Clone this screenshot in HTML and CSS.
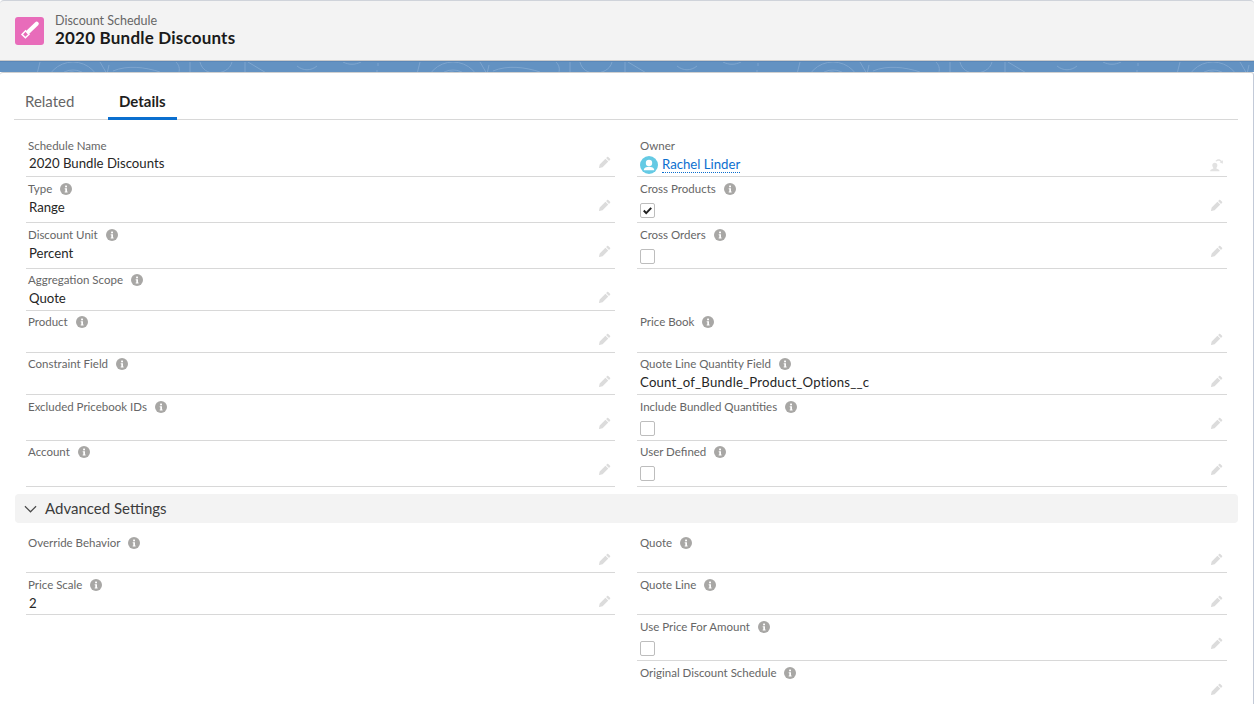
FILE: index.html
```html
<!DOCTYPE html>
<html lang="en">
<head>
<meta charset="utf-8">
<title>2020 Bundle Discounts</title>
<link rel="stylesheet" href="styles.css">
</head>
<body>
<svg width="0" height="0" class="defs" aria-hidden="true">
  <symbol id="pencil" viewBox="0 0 12 12"><path d="M9.2.9l1.900 1.900c.3.3.3.7 0 1L10 4.900 7.100 2 8.200.9c.3-.3.7-.3 1 0zM6.400 2.700l2.900 2.900-5.700 5.700-3.300.7c-.2 0-.4-.2-.3-.4l.7-3.200z"/></symbol>
  <symbol id="info" viewBox="0 0 12 12"><circle cx="6" cy="6" r="6" fill="#a8a7a5"/><rect x="5.100" y="2.600" width="1.900" height="1.700" fill="#fff"/><path d="M4.700 5.200h2.300v3.200h.6v1H4.700v-1h.6V6.200h-.6z" fill="#fff"/></symbol>
  <g id="tile" fill="none" stroke="#8db0d6" stroke-width="1" opacity=".65">
    <circle cx="73" cy="28" r="28"/><circle cx="73" cy="28" r="20"/>
    <path d="M66 12c4-3 9-3 14 2"/>
    <path d="M37 12l3-12M100 0l7 12 2-9M113 9c14-6 32-4 47 1M176 0c4 4 4 9 2 12M190 12V0M200 0c2 8 8 11 15 11s15-3 17-11M245 12V0M248 0l20 12M297 4c6 5 14 5 20 0M343 0c6 3 12 3 18 0M377 12V8M378 4V1"/>
  </g>
</svg>
<header class="page-head">
  <span class="obj-icon">
    <svg viewBox="0 0 29 28" width="29" height="28"><path d="M21.700 6.700L13.300 14.700" fill="none" stroke="#fff" stroke-width="4.200" stroke-linecap="round"/><path d="M10.600 13.800l3.400 3.400-3.600 3.600-3.400-3.400z" fill="none" stroke="#fff" stroke-width="1.500"/></svg>
  </span>
  <div class="head-text">
    <div class="head-type">Discount Schedule</div>
    <div class="head-title">2020 Bundle Discounts</div>
  </div>
</header>
<div class="banner">
  <svg class="banner-art" width="1254" height="12" viewBox="0 0 1254 12" aria-hidden="true">
    <use href="#tile"/>
    <use href="#tile" x="380"/>
    <use href="#tile" x="760"/>
    <use href="#tile" x="1140"/>
  </svg>
</div>
<main class="card">
  <nav class="tabs">
    <span class="tab">Related</span>
    <span class="tab tab-active">Details</span>
  </nav>
  <section class="grid grid-main">
    <div class="field f-first"><div class="label">Schedule Name</div><div class="value v-first">2020 Bundle Discounts</div><svg class="edit"><use href="#pencil"/></svg></div>
    <div class="field f-first"><div class="label">Owner</div><div class="value v-first owner"><span class="avatar"><svg viewBox="0 0 18 18" width="18" height="18"><circle cx="9" cy="9" r="9" fill="#65cae4"/><circle cx="9" cy="7" r="3.200" fill="#fff"/><path d="M3.800 13.800c0-1.900 2.500-3 5.200-3s5.200 1.100 5.200 3v.5H3.800z" fill="#fff"/></svg></span><a class="link">Rachel Linder</a></div><svg class="edit owner-edit" viewBox="0 0 12 12"><path d="M1 11.300c0-1 .8-1.500 2.200-2 .5-.2.600-.6.400-1-.5-.6-.8-1.300-.8-2.100C2.800 4.900 3.700 4 5 4s2.200.9 2.200 2.200c0 .8-.3 1.500-.8 2.100-.2.4-.1.800.4 1 1.400.5 2.200 1 2.200 2z"/><path d="M5.500 2.500C7 .5 9.500.5 11 2.500l1-.6-.2 3-2.700-1.200.9-.6C9 2 7.500 2 6.300 3z"/></svg></div>

    <div class="field"><div class="label">Type<svg class="info"><use href="#info"/></svg></div><div class="value">Range</div><svg class="edit"><use href="#pencil"/></svg></div>
    <div class="field"><div class="label">Cross Products<svg class="info"><use href="#info"/></svg></div><div class="value"><span class="check"><svg viewBox="0 0 14 14" width="13" height="13"><path d="M3 7l2.600 2.800L11 4.200" fill="none" stroke="#222" stroke-width="2.200"/></svg></span></div><svg class="edit"><use href="#pencil"/></svg></div>

    <div class="field"><div class="label">Discount Unit<svg class="info"><use href="#info"/></svg></div><div class="value">Percent</div><svg class="edit"><use href="#pencil"/></svg></div>
    <div class="field"><div class="label">Cross Orders<svg class="info"><use href="#info"/></svg></div><div class="value"><span class="check"></span></div><svg class="edit"><use href="#pencil"/></svg></div>

    <div class="field f-short"><div class="label">Aggregation Scope<svg class="info"><use href="#info"/></svg></div><div class="value">Quote</div><svg class="edit"><use href="#pencil"/></svg></div>
    <div class="field-empty"></div>

    <div class="field f-short"><div class="label">Product<svg class="info"><use href="#info"/></svg></div><div class="value"></div><svg class="edit"><use href="#pencil"/></svg></div>
    <div class="field f-short"><div class="label">Price Book<svg class="info"><use href="#info"/></svg></div><div class="value"></div><svg class="edit"><use href="#pencil"/></svg></div>

    <div class="field f-short"><div class="label">Constraint Field<svg class="info"><use href="#info"/></svg></div><div class="value"></div><svg class="edit"><use href="#pencil"/></svg></div>
    <div class="field f-short"><div class="label">Quote Line Quantity Field<svg class="info"><use href="#info"/></svg></div><div class="value v-code">Count_of_Bundle_Product_Options__c</div><svg class="edit"><use href="#pencil"/></svg></div>

    <div class="field"><div class="label">Excluded Pricebook IDs<svg class="info"><use href="#info"/></svg></div><div class="value"></div><svg class="edit"><use href="#pencil"/></svg></div>
    <div class="field"><div class="label">Include Bundled Quantities<svg class="info"><use href="#info"/></svg></div><div class="value"><span class="check"></span></div><svg class="edit"><use href="#pencil"/></svg></div>

    <div class="field f-tight"><div class="label">Account<svg class="info"><use href="#info"/></svg></div><div class="value"></div><svg class="edit"><use href="#pencil"/></svg></div>
    <div class="field f-tight"><div class="label">User Defined<svg class="info"><use href="#info"/></svg></div><div class="value"><span class="check"></span></div><svg class="edit"><use href="#pencil"/></svg></div>
  </section>
  <div class="section-head">
    <svg viewBox="0 0 14 8" width="13" height="8"><path d="M1 1l6 6 6-6" fill="none" stroke="#4a4a4a" stroke-width="1.300"/></svg>
    <span class="section-title">Advanced Settings</span>
  </div>
  <section class="grid grid-adv">
    <div class="field f-short"><div class="label">Override Behavior<svg class="info"><use href="#info"/></svg></div><div class="value"></div><svg class="edit"><use href="#pencil"/></svg></div>
    <div class="field f-short"><div class="label">Quote<svg class="info"><use href="#info"/></svg></div><div class="value"></div><svg class="edit"><use href="#pencil"/></svg></div>

    <div class="field f-short"><div class="label">Price Scale<svg class="info"><use href="#info"/></svg></div><div class="value">2</div><svg class="edit"><use href="#pencil"/></svg></div>
    <div class="field f-short"><div class="label">Quote Line<svg class="info"><use href="#info"/></svg></div><div class="value"></div><svg class="edit"><use href="#pencil"/></svg></div>

    <div class="field-empty"></div>
    <div class="field"><div class="label">Use Price For Amount<svg class="info"><use href="#info"/></svg></div><div class="value"><span class="check"></span></div><svg class="edit"><use href="#pencil"/></svg></div>

    <div class="field-empty"></div>
    <div class="field"><div class="label">Original Discount Schedule<svg class="info"><use href="#info"/></svg></div><div class="value"></div><svg class="edit"><use href="#pencil"/></svg></div>
  </section>
</main>
</body>
</html>
```
FILE: styles.css
```css
* { box-sizing: border-box; }
html, body { margin: 0; height: 704px; overflow: hidden; }
body { background: #fff; font-family: Lato, "Open Sans", sans-serif; color: #1f1f1f; }
.defs { position: absolute; }

.page-head {
  height: 61px;
  display: flex;
  align-items: center;
  gap: 11px;
  padding: 1px 0 0 15px;
  background: #f3f3f3;
  border-top: 1px solid #cfd3da;
  border-bottom: 1px solid #cbcbcb;
  border-radius: 4px 4px 0 0;
}
.obj-icon {
  width: 29px; height: 28px;
  background: #e86cba;
  border-radius: 3px;
  display: block;
}
.obj-icon svg { display: block; }
.head-text { display: flex; flex-direction: column; padding-bottom: 2px; }
.head-type { font-size: 12.500px; line-height: 15px; color: #666; }
.head-title { font-size: 17px; line-height: 20px; font-weight: 700; color: #1a1a1a; letter-spacing: .2px; }

.banner { height: 11px; background: #6392c2; border-top: 1px solid #5a87b8; overflow: hidden; }
.banner-art { display: block; }

.card {
  height: 632px;
  background: #fff;
  border-top: 1px solid #d0d0d0;
  border-right: 1px solid #c3cad8;
  border-radius: 3px 3px 0 0;
  padding: 0 15px 0 0;
}

.tabs {
  margin-left: 14px;
  height: 47px;
  border-bottom: 1px solid #d8d8d8;
  display: flex;
  font-size: 15px;
  align-items: stretch;
}
.tab {
  padding: 20px 0 0 11px;
  width: 94px;
  color: #666;
  line-height: 17px;
}
.tab-active {
  width: 69px;
  padding-left: 11px;
  color: #1f1f1f;
  font-weight: 700;
  border-bottom: 3px solid #0b6fcf;
  margin-bottom: -1px;
}

.grid {
  display: grid;
  grid-template-columns: 589px 590px;
  column-gap: 22px;
  margin-left: 26px;
}
.grid-main { padding-top: 14px; }

.field {
  position: relative;
  height: 46px;
  border-bottom: 1px solid #d8d8d8;
  padding-top: 5px;
}
.f-first { height: 43px; padding-top: 5px; }
.f-short { height: 42px; padding-top: 5px; }
.grid-main .f-short, .f-tight { padding-top: 4px; }
.field-empty { min-height: 42px; }

.label {
  display: flex;
  align-items: center;
  font-size: 11.500px;
  line-height: 14px;
  color: #666;
  padding-left: 3px;
}
.grid > .field:nth-child(odd) .label { padding-left: 2px; }
.info { width: 12px; height: 12px; margin-left: 8px; flex: none; }
.value {
  font-size: 13.200px;
  line-height: 18px;
  color: #262626;
  padding: 2px 0 0 3px;
  min-height: 18px;
}
.v-first { padding-top: 1px; }
.v-code { letter-spacing: .2px; }
.owner { display: flex; align-items: center; gap: 4px; padding-left: 3px; padding-top: 3px; }
.avatar { width: 18px; height: 18px; display: block; }
.avatar svg { display: block; }
.link { color: #0b6fcf; border-bottom: 1px dotted #0b6fcf; line-height: 15px; }
.check {
  display: block;
  width: 15px; height: 15px;
  margin: 5px 0 0 0;
  border: 1px solid #bdbdbd;
  border-radius: 2px;
  background: #fff;
}
.check svg { display: block; margin: 0; }
.edit {
  position: absolute;
  top: 22px;
  right: 4px;
  width: 12px; height: 12px;
  fill: #dcdcdc;
}
.owner-edit { top: 24px; right: 4px; width: 14px; height: 14px; fill: #e2e2e2; }

.section-head {
  margin: 7px 0 0 15px;
  height: 29px;
  background: #f3f3f3;
  border-radius: 4px;
  display: flex;
  align-items: center;
  gap: 8px;
  padding-left: 9px;
  font-size: 15px;
  color: #3c3c3c;
}
.section-title { line-height: 18px; padding-bottom: 2px; }
.grid-adv { padding-top: 8px; }
```
